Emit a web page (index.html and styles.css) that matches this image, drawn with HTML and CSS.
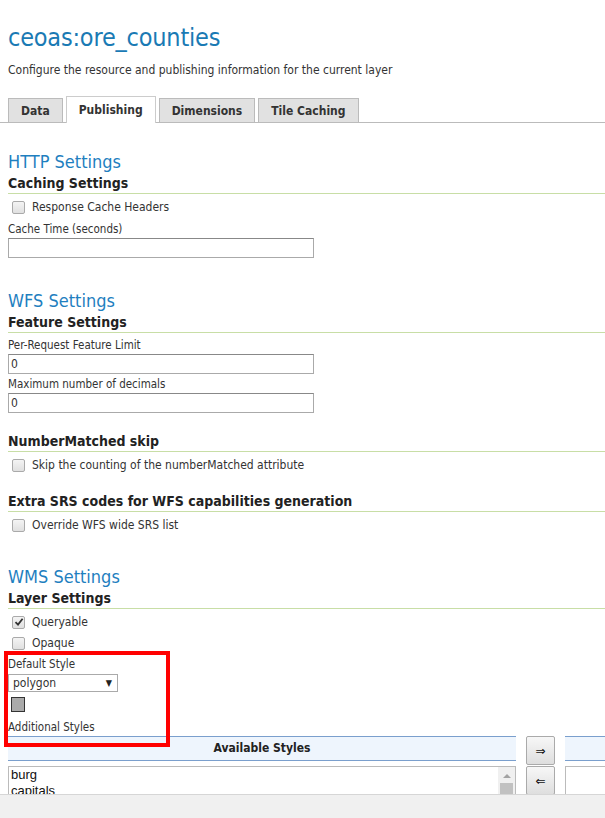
FILE: index.html
```html
<!DOCTYPE html>
<html>
<head>
<meta charset="utf-8">
<link rel="stylesheet" href="styles.css">
</head>
<body>
<div class="page">
  <h1 class="title">ceoas:ore_counties</h1>
  <p class="subtitle">Configure the resource and publishing information for the current layer</p>
  <ul class="tabs">
    <li class="tab">Data</li>
    <li class="tab active">Publishing</li>
    <li class="tab">Dimensions</li>
    <li class="tab">Tile Caching</li>
  </ul>

  <h2 class="sec">HTTP Settings</h2>
  <h3 class="sub">Caching Settings</h3>
  <label class="check"><span class="box"></span>Response Cache Headers</label>
  <div class="field">
    <label class="lbl">Cache Time (seconds)</label>
    <div class="input"></div>
  </div>

  <h2 class="sec sec-gap">WFS Settings</h2>
  <h3 class="sub">Feature Settings</h3>
  <div class="field">
    <label class="lbl">Per-Request Feature Limit</label>
    <div class="input">0</div>
  </div>
  <div class="field">
    <label class="lbl">Maximum number of decimals</label>
    <div class="input">0</div>
  </div>
  <h3 class="sub sub-gap">NumberMatched skip</h3>
  <label class="check"><span class="box"></span>Skip the counting of the numberMatched attribute</label>
  <h3 class="sub sub-gap2">Extra SRS codes for WFS capabilities generation</h3>
  <label class="check"><span class="box"></span>Override WFS wide SRS list</label>

  <h2 class="sec sec-gap2">WMS Settings</h2>
  <h3 class="sub">Layer Settings</h3>
  <label class="check"><span class="box checked"><svg width="10" height="10" viewBox="0 0 10 10"><path d="M1.5 5.2 L4 7.6 L8.6 1.8" fill="none" stroke="#333" stroke-width="1.8"/></svg></span>Queryable</label>
  <label class="check"><span class="box"></span>Opaque</label>
  <div class="highlight-wrap">
    <div class="field">
      <label class="lbl">Default Style</label>
      <div class="select"><span>polygon</span><span class="arrow">▼</span></div>
    </div>
    <div class="swatch"></div>
    <label class="lbl lbl-add">Additional Styles</label>
    <div class="redbox"></div>
  </div>
  <div class="palette">
    <div class="pcol left">
      <div class="phead">Available Styles</div>
      <div class="plist">
        <div class="items">
          <div>burg</div>
          <div>capitals</div>
        </div>
        <div class="scroll"><span class="up"></span><span class="thumb"></span></div>
      </div>
    </div>
    <div class="buttons">
      <button class="btn">⇒</button>
      <button class="btn">⇐</button>
    </div>
    <div class="pcol right">
      <div class="phead"></div>
      <div class="plist"></div>
    </div>
  </div>
</div>
<div class="footer"></div>
</body>
</html>
```
FILE: styles.css
```css
html, body {
  margin: 0;
  padding: 0;
  background: #fff;
  overflow: hidden;
}
body {
  font-family: "DejaVu Sans Condensed", "DejaVu Sans", sans-serif;
  font-size: 12px;
  color: #333;
  width: 605px;
  height: 818px;
}
.page {
  padding: 0 0 0 8px;
}
.title {
  margin: 0;
  padding-top: 22px;
  font-size: 25px;
  font-weight: normal;
  color: #1a7ab4;
  line-height: 32px;
  letter-spacing: -0.2px;
}
.subtitle {
  margin: 8px 0 0;
  font-size: 12px;
  line-height: 16px;
  color: #333;
}
.tabs {
  list-style: none;
  margin: 19px 0 0 -8px;
  padding: 0 0 0 8px;
  display: flex;
  gap: 3px;
  border-bottom: 1px solid #bbb;
  height: 25px;
  align-items: flex-end;
}
.tab {
  background: #e1e1e1;
  border: 1px solid #bbb;
  border-bottom: none;
  height: 24px;
  box-sizing: border-box;
  padding: 0 12px;
  font-weight: bold;
  font-size: 12px;
  line-height: 24px;
  color: #333;
}
.tab.active {
  background: #fff;
  height: 27px;
  margin-bottom: -1px;
  line-height: 26px;
  border-color: #ccc;
}
.sec {
  margin: 28px 0 0;
  font-size: 18px;
  font-weight: normal;
  color: #1f7fbf;
  line-height: 22px;
}
.sec-gap { margin-top: 32px; }
.sec-gap2 { margin-top: 31px; }
.sub {
  margin: 0;
  font-size: 14px;
  font-weight: bold;
  color: #222;
  line-height: 20px;
  border-bottom: 1px solid #c8dea6;
}
.sub-gap { margin-top: 18px; }
.sub-gap2 { margin-top: 16px; }
.check {
  display: flex;
  align-items: center;
  height: 20px;
  margin-top: 3px;
  padding-left: 4px;
  font-size: 12px;
}
.check + .check { margin-top: 1px; }
.box {
  width: 11px;
  height: 11px;
  border: 1px solid #aaa;
  border-radius: 2px;
  background: linear-gradient(#f4f4f4, #e0e0e0);
  margin-right: 7px;
  display: flex;
  align-items: center;
  justify-content: center;
}
.box svg { display: block; }
.field {
  margin-top: 5px;
}
.field + .field { margin-top: 3px; }
.lbl {
  display: block;
  font-size: 11.5px;
  line-height: 14px;
  color: #333;
}
.input {
  margin-top: 2px;
  width: 306px;
  height: 20px;
  box-sizing: border-box;
  border: 1px solid #aaa;
  border-top-color: #888;
  padding: 0 2px;
  font-size: 12px;
  line-height: 18px;
}
.highlight-wrap {
  position: relative;
  padding-top: 4px;
}
.highlight-wrap .field { margin-top: 0; }
.select {
  margin-top: 3px;
  width: 110px;
  height: 18px;
  box-sizing: border-box;
  border: 1px solid #aaa;
  display: flex;
  justify-content: space-between;
  align-items: center;
  padding: 0 5px 0 4px;
  font-size: 12px;
}
.arrow {
  font-size: 9px;
  color: #222;
}
.swatch {
  margin: 5px 0 0 3px;
  width: 12px;
  height: 13px;
  border: 1px solid #333;
  background: #aaa;
}
.lbl-add {
  margin-top: 8px;
}
.redbox {
  position: absolute;
  left: -4px;
  top: -2px;
  width: 166px;
  height: 96px;
  box-sizing: border-box;
  border: 4px solid #f00;
  pointer-events: none;
  z-index: 2;
}
.palette {
  display: flex;
  align-items: flex-start;
  margin-top: 2px;
}
.pcol { flex-shrink: 0; }
.pcol.left { width: 508px; }
.pcol.right { width: 60px; margin-left: 10px; }
.phead {
  height: 25px;
  box-sizing: border-box;
  background: #eef5fd;
  border-top: 1px solid #7a9fcd;
  border-bottom: 1px solid #7a9fcd;
  text-align: center;
  font-weight: bold;
  font-size: 12px;
  line-height: 23px;
  color: #222;
}
.plist {
  margin-top: 5px;
  height: 60px;
  border: 1px solid #bbb;
  display: flex;
  justify-content: space-between;
  box-sizing: border-box;
}
.items {
  font-family: "Liberation Sans", Arial, sans-serif;
  font-size: 13px;
  line-height: 16px;
  color: #111;
  padding: 0 2px;
}
.scroll {
  width: 17px;
  background: #f0f0f0;
  display: flex;
  flex-direction: column;
  align-items: center;
}
.up {
  margin-top: 7px;
  width: 0;
  height: 0;
  border-left: 4px solid transparent;
  border-right: 4px solid transparent;
  border-bottom: 4px solid #a3a3a3;
}
.thumb {
  margin-top: 5px;
  width: 13px;
  height: 40px;
  background: #c1c1c1;
}
.buttons {
  display: flex;
  flex-direction: column;
  gap: 1px;
  margin-left: 10px;
  flex-shrink: 0;
}
.btn {
  width: 29px;
  height: 29px;
  border: 1px solid #aaa;
  border-radius: 2px;
  background: linear-gradient(#f7f7f7, #dedede);
  font-size: 12px;
  padding: 0;
  color: #111;
  font-family: "DejaVu Sans", sans-serif;
}
.footer {
  position: fixed;
  left: 0;
  right: 0;
  bottom: 0;
  height: 23px;
  background: #f0f0f0;
  border-top: 1px solid #d6d6d6;
  z-index: 5;
}
```
